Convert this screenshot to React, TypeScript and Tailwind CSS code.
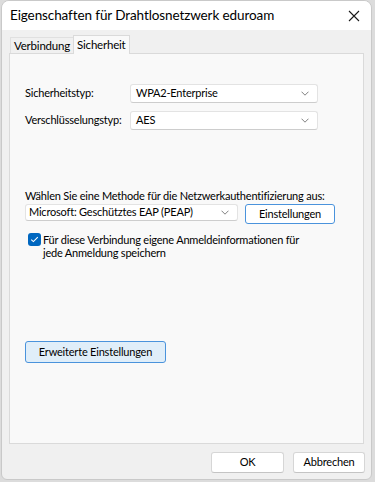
import React from 'react'

const font = { fontFamily: 'Lato, "Noto Sans", sans-serif' }

const Chevron = () => (
  <svg width="8" height="5" viewBox="0 0 8 5" className="text-[#808080] shrink-0">
    <path d="M0.5 0.7 L4 4.2 L7.5 0.7" fill="none" stroke="currentColor" strokeWidth="1" />
  </svg>
)

const Select = ({ value, className }: { value: string; className: string }) => (
  <div
    className={`flex items-center justify-between bg-white border border-[#e3e3e3] border-b-[#cdcdcd] rounded-[3px] pl-[5px] pr-[8px] text-black whitespace-nowrap ${className}`}
  >
    <span>{value}</span>
    <Chevron />
  </div>
)

export default function App() {
  return (
    <div className="w-[375px] h-[482px] bg-[#dcdcdc] overflow-hidden" style={font}>
      <div className="ml-[1px] w-[371px] h-[480px] bg-[#f0f0f0] border border-[#c9c9c9] rounded-t-[8px] rounded-b-[6px] overflow-hidden flex flex-col">
        <div className="h-[29px] bg-white flex items-center justify-between pl-[8px] pr-[11px] shrink-0">
          <span className="text-[13.5px] tracking-[-0.1px] text-black whitespace-nowrap">Eigenschaften für Drahtlosnetzwerk eduroam</span>
          <svg width="12" height="12" viewBox="0 0 12 12">
            <path d="M1 1 L11 11 M11 1 L1 11" stroke="#1a1a1a" strokeWidth="1.1" />
          </svg>
        </div>

        <div className="flex items-end pl-[8px] h-[23px] shrink-0 text-[11.5px] tracking-[-0.2px]">
          <div className="h-[16px] px-[3px] flex items-center border-t border-l border-[#e0e0e0] bg-[#f0f0f0]">Verbindung</div>
          <div className="h-[19px] px-[3px] flex items-center bg-[#f9f9f9] border-t border-l border-r border-[#dadada] relative top-[1px]">
            Sicherheit
          </div>
        </div>

        <div className="mx-[7px] h-[391px] shrink-0 bg-[#f9f9f9] border border-[#dadada] flex flex-col text-[11px] tracking-[-0.2px] text-black pl-[15px] whitespace-nowrap">
          <div className="mt-[30px] flex items-center">
            <span className="w-[105px]">Sicherheitstyp:</span>
            <Select value="WPA2-Enterprise" className="w-[188px] h-[19px]" />
          </div>
          <div className="mt-[8px] flex items-center">
            <span className="w-[105px]">Verschlüsselungstyp:</span>
            <Select value="AES" className="w-[188px] h-[19px]" />
          </div>

          <div className="mt-[59px] leading-[14px]">Wählen Sie eine Methode für die Netzwerkauthentifizierung aus:</div>
          <div className="mt-[1px] flex items-start gap-[7px]">
            <Select value="Microsoft: Geschütztes EAP (PEAP)" className="w-[213px] h-[17px] !pl-[3px]" />
            <div className="w-[90px] h-[20px] bg-white border border-[#4a93dc] rounded-[3px] flex items-center justify-center">
              Einstellungen
            </div>
          </div>

          <div className="mt-[9px] flex items-start pl-[3px]">
            <div className="w-[13px] h-[13px] bg-[#0067c0] rounded-[3px] flex items-center justify-center shrink-0">
              <svg width="9" height="7" viewBox="0 0 9 7">
                <path d="M1.2 3.6 L3.4 5.6 L7.8 1.2" fill="none" stroke="white" strokeWidth="1.1" />
              </svg>
            </div>
            <div className="ml-[2px] leading-[13px]">
              Für diese Verbindung eigene Anmeldeinformationen für
              <br />
              jede Anmeldung speichern
            </div>
          </div>

          <div className="mt-[82px] w-[141px] h-[22px] bg-[#e0eef9] border border-[#4a93dc] rounded-[3px] flex items-center justify-center">
            Erweiterte Einstellungen
          </div>
        </div>

        <div className="flex justify-end gap-[9px] pr-[6px] pt-[8px] text-[11px] tracking-[-0.2px]">
          <div className="w-[73px] h-[21px] bg-white border border-[#d6d6d6] border-b-[#c4c4c4] rounded-[3px] flex items-center justify-center">OK</div>
          <div className="w-[72px] h-[21px] bg-white border border-[#d6d6d6] border-b-[#c4c4c4] rounded-[3px] flex items-center justify-center">Abbrechen</div>
        </div>
      </div>
    </div>
  )
}
